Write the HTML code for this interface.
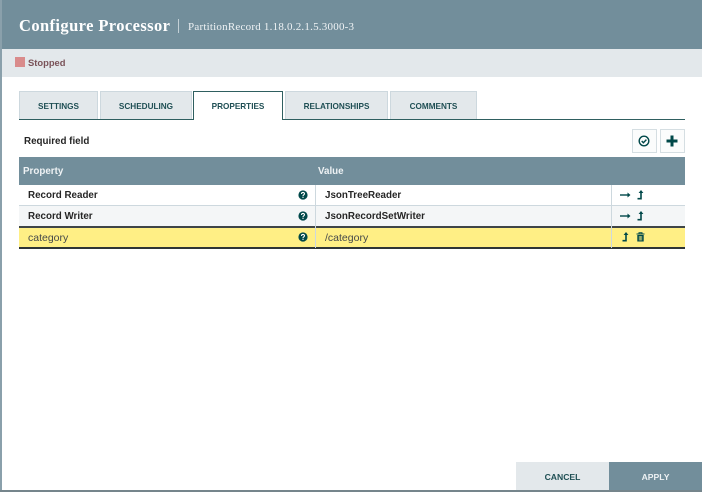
<!DOCTYPE html>
<html><head><meta charset="utf-8"><style>
html,body{margin:0;padding:0;width:702px;height:492px;overflow:hidden;background:#fff}
body{position:relative;font-family:"Liberation Sans",sans-serif}
div,span{position:absolute;white-space:nowrap;box-sizing:border-box}
svg{position:absolute}
.tab{top:91px;height:28px;background:#e3e8eb;border:1px solid #cdd8de;border-bottom:0;color:#1f4f54;font-size:8.2px;font-weight:bold;text-align:center;line-height:30px}
.b{font-size:9.8px;font-weight:bold;color:#262626}
.r{font-size:10.5px;color:#45494a}
</style></head><body>
<div style="left:0;top:0;width:2px;height:492px;background:#8aa0ab"></div>
<div style="left:2px;top:0;width:700px;height:49px;background:#728e9b"></div>
<div style="left:19px;top:16px;font:bold 16.5px/20px 'Liberation Serif',serif;color:#fff;letter-spacing:.4px">Configure Processor</div>
<div style="left:178px;top:19px;width:1px;height:14px;background:#c3d0d6"></div>
<div style="left:188px;top:20px;font:11px/15px 'Liberation Serif',serif;color:#eef2f4;letter-spacing:.22px">PartitionRecord 1.18.0.2.1.5.3000-3</div>
<div style="left:2px;top:49px;width:700px;height:28px;background:#e3e8eb"></div>
<div style="left:15px;top:57px;width:10px;height:10px;background:#d98b8b"></div>
<div style="left:28px;top:56px;font:bold 9.4px/14px 'Liberation Sans',sans-serif;color:#7a5258">Stopped</div>

<div class="tab" style="left:19px;width:79px">SETTINGS</div>
<div class="tab" style="left:100px;width:92px">SCHEDULING</div>
<div class="tab" style="left:285px;width:103px">RELATIONSHIPS</div>
<div class="tab" style="left:390px;width:87px">COMMENTS</div>
<div style="left:19px;top:119px;width:666px;height:1px;background:#2f5f60"></div>
<div class="tab" style="left:193px;width:90px;height:29px;background:#fff;border:1px solid #2f5f60;border-bottom:0;line-height:30px">PROPERTIES</div>

<div class="b" style="left:24px;top:135px;line-height:14px">Required field</div>
<div style="left:632px;top:129px;width:25px;height:24px;background:#fbfcfc;border:1px solid #d5dee2"></div>
<div style="left:660px;top:129px;width:25px;height:24px;background:#fbfcfc;border:1px solid #d5dee2"></div>
<svg style="left:638px;top:135px" width="12" height="12" viewBox="0 0 12 12"><circle cx="6" cy="6" r="4.8" fill="none" stroke="#004849" stroke-width="1.4"/><path d="M3.7 6l1.7 1.7 3-3.1" fill="none" stroke="#004849" stroke-width="1.4"/></svg>
<svg style="left:666px;top:135px" width="12" height="12" viewBox="0 0 12 12"><path d="M6 .5v11M.5 6h11" stroke="#004849" stroke-width="3" fill="none"/></svg>

<div style="left:19px;top:157px;width:666px;height:28px;background:#728e9b"></div>
<div style="left:23px;top:165px;font:bold 9.8px/14px 'Liberation Sans',sans-serif;color:#eef2f4">Property</div>
<div style="left:318px;top:165px;font:bold 9.8px/14px 'Liberation Sans',sans-serif;color:#eef2f4">Value</div>

<div style="left:19px;top:185px;width:666px;height:20px;background:#fff"></div>
<div style="left:19px;top:205px;width:666px;height:1px;background:#cdd8de"></div>
<div style="left:19px;top:206px;width:666px;height:20px;background:#f4f6f7"></div>
<div style="left:19px;top:226px;width:666px;height:2px;background:#3f4547"></div>
<div style="left:19px;top:228px;width:666px;height:19px;background:#ffef85"></div>
<div style="left:19px;top:247px;width:666px;height:1.5px;background:#2e3436"></div>
<div style="left:315px;top:185px;width:1px;height:63px;background:#cdd8de"></div>
<div style="left:611px;top:185px;width:1px;height:63px;background:#cdd8de"></div>

<div class="b" style="left:28px;top:189px;line-height:14px">Record Reader</div>
<div class="b" style="left:28px;top:210px;line-height:14px">Record Writer</div>
<div class="r" style="left:28px;top:231px;line-height:14px">category</div>
<div class="b" style="left:325px;top:189px;line-height:14px">JsonTreeReader</div>
<div class="b" style="left:325px;top:210px;line-height:14px">JsonRecordSetWriter</div>
<div class="r" style="left:325px;top:231px;line-height:14px">/category</div>

<svg style="left:298px;top:190px" width="10" height="10" viewBox="0 0 10 10"><circle cx="5" cy="5" r="4.6" fill="#004849"/><path d="M3.5 4c0-2 3-2 3-.2 0 1-1.5 1-1.5 2.2" stroke="#fff" stroke-width="1.1" fill="none"/><rect x="4.4" y="6.7" width="1.2" height="1.2" fill="#fff"/></svg>
<svg style="left:298px;top:211px" width="10" height="10" viewBox="0 0 10 10"><circle cx="5" cy="5" r="4.6" fill="#004849"/><path d="M3.5 4c0-2 3-2 3-.2 0 1-1.5 1-1.5 2.2" stroke="#fff" stroke-width="1.1" fill="none"/><rect x="4.4" y="6.7" width="1.2" height="1.2" fill="#fff"/></svg>
<svg style="left:298px;top:232px" width="10" height="10" viewBox="0 0 10 10"><circle cx="5" cy="5" r="4.6" fill="#004849"/><path d="M3.5 4c0-2 3-2 3-.2 0 1-1.5 1-1.5 2.2" stroke="#fff" stroke-width="1.1" fill="none"/><rect x="4.4" y="6.7" width="1.2" height="1.2" fill="#fff"/></svg>

<svg style="left:620px;top:191px" width="11" height="8" viewBox="0 0 11 8"><path d="M0 4h8" stroke="#004849" stroke-width="1.4"/><path d="M7.5 1.5L10.5 4 7.5 6.5z" fill="#004849"/></svg>
<svg style="left:637px;top:190px" width="7" height="10" viewBox="0 0 7 10"><path d="M0.5 8.7H4V2" stroke="#004849" stroke-width="1.6" fill="none"/><path d="M1.6 3L4 0l2.4 3z" fill="#004849"/></svg>
<svg style="left:620px;top:212px" width="11" height="8" viewBox="0 0 11 8"><path d="M0 4h8" stroke="#004849" stroke-width="1.4"/><path d="M7.5 1.5L10.5 4 7.5 6.5z" fill="#004849"/></svg>
<svg style="left:637px;top:211px" width="7" height="10" viewBox="0 0 7 10"><path d="M0.5 8.7H4V2" stroke="#004849" stroke-width="1.6" fill="none"/><path d="M1.6 3L4 0l2.4 3z" fill="#004849"/></svg>
<svg style="left:622px;top:232px" width="7" height="10" viewBox="0 0 7 10"><path d="M0.5 8.7H4V2" stroke="#004849" stroke-width="1.6" fill="none"/><path d="M1.6 3L4 0l2.4 3z" fill="#004849"/></svg>
<svg style="left:636px;top:232px" width="9" height="10" viewBox="0 0 9 10"><path d="M0.5 2h8M3 2V.8h3V2" stroke="#004849" stroke-width="1" fill="none"/><path d="M1.3 3h6.4v6.5H1.3z" fill="#004849"/><path d="M3.2 4v4.5M4.5 4v4.5M5.8 4v4.5" stroke="#ffef85" stroke-width=".6"/></svg>

<div style="left:516px;top:462px;width:93px;height:28px;background:#e3e8eb;color:#1f4f54;font:bold 8.6px/30px 'Liberation Sans',sans-serif;text-align:center">CANCEL</div>
<div style="left:609px;top:462px;width:93px;height:28px;background:#728e9b;color:#eef2f4;font:bold 8.6px/30px 'Liberation Sans',sans-serif;text-align:center">APPLY</div>
<div style="left:0;top:490px;width:702px;height:2px;background:#75858c"></div>
</body></html>
